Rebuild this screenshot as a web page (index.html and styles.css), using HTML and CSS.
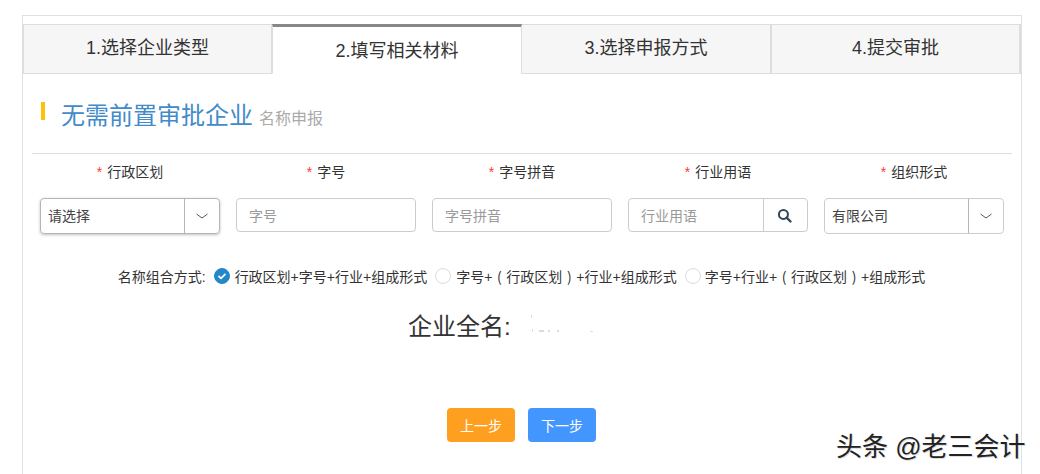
FILE: index.html
```html
<!DOCTYPE html>
<html lang="zh-CN">
<head>
<meta charset="utf-8">
<title>名称申报</title>
<link rel="stylesheet" href="styles.css">
</head>
<body>
<div class="card">
  <div class="tabs">
    <div class="tab">1.选择企业类型</div>
    <div class="tab active">2.填写相关材料</div>
    <div class="tab">3.选择申报方式</div>
    <div class="tab">4.提交审批</div>
  </div>
  <div class="heading">
    <span class="mark"></span>
    <span class="title">无需前置审批企业</span>
    <span class="subtitle">名称申报</span>
  </div>
  <div class="form">
    <div class="field">
      <div class="label"><i>*</i>行政区划</div>
      <div class="control select focus"><span class="value">请选择</span><span class="addon"><svg width="14" height="8" viewBox="0 0 14 8"><path d="M1.5 2 L7 6 L12.5 2" fill="none" stroke="#555" stroke-width="1"/></svg></span></div>
    </div>
    <div class="field">
      <div class="label"><i>*</i>字号</div>
      <div class="control"><span class="placeholder">字号</span></div>
    </div>
    <div class="field">
      <div class="label"><i>*</i>字号拼音</div>
      <div class="control"><span class="placeholder">字号拼音</span></div>
    </div>
    <div class="field">
      <div class="label"><i>*</i>行业用语</div>
      <div class="control"><span class="placeholder">行业用语</span><span class="addon search"><svg width="15" height="15" viewBox="0 0 14 14"><circle cx="6" cy="6" r="4.2" fill="none" stroke="#33475b" stroke-width="1.9"/><path d="M9 9 L12.6 12.6" stroke="#33475b" stroke-width="2.2" stroke-linecap="round"/></svg></span></div>
    </div>
    <div class="field">
      <div class="label"><i>*</i>组织形式</div>
      <div class="control select"><span class="value">有限公司</span><span class="addon"><svg width="14" height="8" viewBox="0 0 14 8"><path d="M1.5 2 L7 6 L12.5 2" fill="none" stroke="#555" stroke-width="1"/></svg></span></div>
    </div>
  </div>
  <div class="combo">
    <span class="combo-label">名称组合方式:</span>
    <span class="radio checked"><svg width="10" height="8" viewBox="0 0 10 8"><path d="M1.5 4 L4 6.3 L8.5 1.8" fill="none" stroke="#fff" stroke-width="1.7"/></svg></span>
    <span class="option">行政区划+字号+行业+组成形式</span>
    <span class="radio"></span>
    <span class="option">字号+<span class="paren">(</span>行政区划<span class="paren">)</span>+行业+组成形式</span>
    <span class="radio last"></span>
    <span class="option">字号+行业+<span class="paren">(</span>行政区划<span class="paren">)</span>+组成形式</span>
  </div>
  <div class="fullname">
    <span>企业全名:</span>
    <svg class="smudge" width="70" height="24" viewBox="0 0 70 24"><g fill="#d8dde2"><rect x="3" y="3" width="1" height="3"/><rect x="4" y="17" width="1" height="3"/><rect x="11" y="18" width="5" height="2"/><rect x="20" y="18" width="2" height="2"/><rect x="29" y="18" width="2" height="2"/><rect x="62" y="19" width="3" height="1"/></g></svg>
  </div>
  <div class="actions">
    <button class="btn prev" type="button">上一步</button>
    <button class="btn next" type="button">下一步</button>
  </div>
</div>
<div class="watermark">头条 @老三会计</div>
</body>
</html>
```
FILE: styles.css
```css
* { box-sizing: border-box; }
html, body { height: 100%; }
body {
  margin: 0;
  background: #fff;
  overflow: hidden;
  font-family: "Liberation Sans", "Noto Sans CJK SC", sans-serif;
  color: #333;
  position: relative;
}
.card {
  margin: 15px 18px 0 22px;
  height: 459px;
  border: 1px solid #e0e0e0;
  border-bottom: 0;
  padding-top: 8px;
}
.tabs { display: grid; grid-template-columns: 249px 250px 249px 250px; height: 50px; }
.tab {
  display: flex;
  align-items: center;
  justify-content: center;
  background: #f6f6f6;
  border: 1px solid #ddd;
  border-left-width: 0;
  font-size: 18px;
  padding-bottom: 7px;
}
.tab:first-child { border-left-width: 1px; }
.tab:last-child { border-left-width: 1px; border-right-width: 2px; }
.tab.active {
  background: #fff;
  border-top: 3px solid #888;
  border-bottom-color: #fff;
  border-left: 1px solid #ddd;
  border-right: 1px solid #ddd;
  padding-bottom: 3px;
}
.heading {
  display: flex;
  align-items: flex-start;
  height: 80px;
  margin: 0 9px;
  border-bottom: 1px solid #ddd;
  padding: 28px 0 0 9px;
}
.mark { width: 4px; height: 18px; background: #ffc107; margin-right: 16px; }
.title { font-size: 24px; line-height: 28px; color: #428bca; }
.subtitle { font-size: 16px; line-height: 20px; color: #aaa; margin: 7px 0 0 6px; }
.form { display: flex; gap: 16px; padding: 8px 0 0 17px; }
.field { width: 180px; }
.label { height: 20px; line-height: 20px; font-size: 14px; text-align: center; margin-bottom: 16px; }
.label i { color: #f33; font-style: normal; margin-right: 5px; }
.control {
  display: flex;
  align-items: center;
  height: 34px;
  margin-top: 1px;
  border: 1px solid #ccc;
  border-radius: 4px;
  font-size: 14px;
}
.control.select { height: 36px; margin-top: 0; }
.control.focus { border-color: #b5b5b5; box-shadow: 0 1px 3px rgba(0,0,0,.25); }
.value { flex: 1; padding: 0 0 2px 7px; color: #444; }
.placeholder { flex: 1; padding-left: 12px; color: #999; }
.addon {
  display: flex;
  align-items: center;
  justify-content: center;
  align-self: stretch;
  width: 35px;
  border-left: 1px solid #b5b5b5;
}
.addon.search { width: 44px; border-left-color: #ccc; padding-right: 2px; }
.combo {
  display: flex;
  align-items: center;
  justify-content: center;
  height: 20px;
  margin-top: 32px;
  padding-right: 1px;
  font-size: 14px;
}
.combo-label { margin-right: 8px; }
.radio {
  display: flex;
  align-items: center;
  justify-content: center;
  width: 16px;
  height: 16px;
  border: 1px solid #ddd;
  border-radius: 50%;
  margin-right: 5px;
}
.radio.checked { background: #2487c9; border-color: #2487c9; }
.radio.last { margin-right: 4px; }
.option { margin-right: 8px; color: #333; white-space: nowrap; }
.option:last-child { margin-right: 0; }
.paren { display: inline-block; width: 14px; text-align: center; font-family: "Noto Sans CJK SC", sans-serif; }
.fullname {
  display: flex;
  align-items: center;
  justify-content: flex-start;
  height: 36px;
  margin-top: 20px;
  padding-left: 385px;
  font-size: 24px;
}
.smudge { margin-left: 17px; }
.actions { display: flex; justify-content: center; gap: 13px; margin-top: 66px; padding-right: 1px; }
.btn {
  width: 68px;
  height: 34px;
  border: 0;
  border-radius: 4px;
  color: #fff;
  font-family: inherit;
  font-size: 14px;
  padding: 0;
}
.prev { background: #ff9f1f; }
.next { background: #4496ff; }
.watermark {
  position: absolute;
  left: 836px;
  top: 430px;
  font-size: 26px;
  line-height: 34px;
  color: #222;
  white-space: nowrap;
  text-shadow: 1px 1px 0 #ddd;
}
```
